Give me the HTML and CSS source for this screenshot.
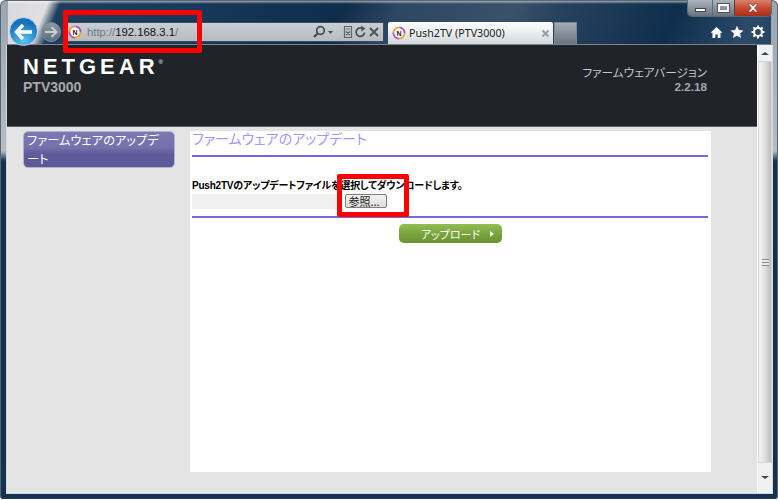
FILE: index.html
```html
<!DOCTYPE html>
<html lang="ja">
<head>
<meta charset="utf-8">
<title>Push2TV (PTV3000)</title>
<link rel="stylesheet" href="styles.css">
</head>
<body>
<div class="window">
  <div class="chrome">
    <div class="captions">
      <span class="cap cap-min"><i></i></span>
      <span class="cap cap-max"><i></i></span>
      <span class="cap cap-close">
        <svg width="14" height="10" viewBox="0 0 14 10"><path d="M2 1h3l2 2.2L9 1h3L8.600 5 12 9H9L7 6.800 5 9H2l3.400-4z" fill="#fff" stroke="#7d2a20" stroke-width=".6"/></svg>
      </span>
    </div>
    <div class="navbar">
      <div class="nav-buttons">
        <span class="back">
          <svg width="20" height="18" viewBox="0 0 20 18"><path d="M9 2 2.500 9 9 16M3 9h15" fill="none" stroke="#fff" stroke-width="3.400"/></svg>
        </span>
        <span class="forward">
          <svg width="14" height="12" viewBox="0 0 14 12"><path d="M7.500 1 12.500 6 7.500 11M12 6H1" fill="none" stroke="#c7ced4" stroke-width="2"/></svg>
        </span>
      </div>
      <div class="address">
        <svg class="favicon" width="14" height="14" viewBox="0 0 14 14"><circle cx="7" cy="7" r="5.500" fill="none" stroke="#f0a030" stroke-width="2" stroke-dasharray="8.600 8.600"/><circle cx="7" cy="7" r="5.500" fill="none" stroke="#b050c0" stroke-width="2" stroke-dasharray="8.600 8.600" stroke-dashoffset="8.600"/><circle cx="7" cy="7" r="4.500" fill="#fff"/><text x="7" y="9.500" class="fav-n">N</text></svg>
        <span class="url"><span class="url-dim">http://</span>192.168.3.1<span class="url-dim">/</span></span>
        <span class="addr-tools">
          <svg width="14" height="14" viewBox="0 0 14 14"><circle cx="8.500" cy="5.500" r="3.800" fill="none" stroke="#444c52" stroke-width="1.700"/><path d="M5.800 8.200 2 12" stroke="#444c52" stroke-width="2.200"/></svg>
          <svg width="7" height="14" viewBox="0 0 7 14"><path d="M1 6h5L3.500 9z" fill="#444c52"/></svg>
          <svg class="gap-l" width="10" height="14" viewBox="0 0 10 14"><path d="M1.500 1.500h7v11h-7zM3 4h4M3 6.500 7 10M7 6.500 3 10" fill="none" stroke="#5f676d" stroke-width="1.200"/></svg>
          <svg width="13" height="14" viewBox="0 0 13 14"><path d="M10.500 7.500A4.200 4.200 0 1 1 8.500 3.600" fill="none" stroke="#4c5359" stroke-width="1.800"/><path d="M7 .5l4.500 3L7.500 6.500z" fill="#4c5359"/></svg>
          <svg width="12" height="14" viewBox="0 0 12 14"><path d="M2 3l8 8M10 3l-8 8" stroke="#4c5359" stroke-width="2"/></svg>
        </span>
      </div>
      <div class="tab">
        <svg class="favicon" width="14" height="14" viewBox="0 0 14 14"><circle cx="7" cy="7" r="5.500" fill="none" stroke="#f0a030" stroke-width="2" stroke-dasharray="8.600 8.600"/><circle cx="7" cy="7" r="5.500" fill="none" stroke="#b050c0" stroke-width="2" stroke-dasharray="8.600 8.600" stroke-dashoffset="8.600"/><circle cx="7" cy="7" r="4.500" fill="#fff"/><text x="7" y="9.500" class="fav-n">N</text></svg>
        <span class="tab-title">Push2TV (PTV3000)</span>
        <svg width="9" height="9" viewBox="0 0 9 9"><path d="M1.500 1.500l6 6M7.500 1.500l-6 6" stroke="#9a9fa4" stroke-width="2"/></svg>
      </div>
      <div class="newtab"></div>
      <div class="tools">
        <svg width="13" height="13" viewBox="0 0 13 13"><path d="M6.500 1 0.500 6.800H2.500V12H5.300V8.500H7.700V12H10.500V6.800H12.500z" fill="#fff"/></svg>
        <svg width="14" height="14" viewBox="0 0 14 14"><path d="M7 .8l1.900 4.300 4.600.4-3.500 3 1.100 4.600L7 10.700l-4.100 2.400L4 8.500.5 5.500l4.600-.4z" fill="#fff"/></svg>
        <svg width="14" height="14" viewBox="0 0 14 14"><circle cx="7" cy="7" r="4" fill="none" stroke="#fff" stroke-width="2.200"/><path d="M7 .5v3M7 10.500v3M.5 7h3M10.500 7h3M2.400 2.400l2.100 2.100M9.500 9.500l2.100 2.100M11.600 2.400 9.500 4.500M4.500 9.500l-2.100 2.100" stroke="#fff" stroke-width="2"/></svg>
      </div>
    </div>
  </div>

  <div class="viewport">
    <div class="page">
      <header class="brand">
        <div>
          <div class="logo">NETGEAR<span class="reg">®</span></div>
          <div class="model">PTV3000</div>
        </div>
        <div class="version">
          <div class="version-label">ファームウェアバージョン</div>
          <div class="version-num">2.2.18</div>
        </div>
      </header>
      <div class="body-area">
        <nav class="sidebar">
          <a class="menu-item">ファームウェアのアップデート</a>
        </nav>
        <main class="panel">
          <h1 class="panel-title">ファームウェアのアップデート</h1>
          <p class="instruction">Push2TVのアップデートファイルを選択してダウンロードします。</p>
          <div class="file-row">
            <div class="file-field"></div>
            <button class="browse">参照...</button>
          </div>
          <div class="actions">
            <button class="upload">アップロード<i class="upload-arrow"></i></button>
          </div>
        </main>
      </div>
    </div>
    <div class="scrollbar">
      <div class="sb-btn"><i class="arrow-up"></i></div>
      <div class="sb-thumb"><i class="grip"></i></div>
      <div class="sb-btn sb-btn-end"><i class="arrow-down"></i></div>
    </div>
  </div>
</div>
<div class="mark mark-url"></div>
<div class="mark mark-browse"></div>
</body>
</html>
```

FILE: styles.css
```css
* { box-sizing: border-box; }
html, body { margin: 0; padding: 0; }
body {
  width: 778px;
  height: 500px;
  position: relative;
  overflow: hidden;
  background: #fff;
  font-family: "Liberation Sans", "Noto Sans CJK JP", sans-serif;
  font-feature-settings: "palt";
}
.window {
  height: 499px;
  display: flex;
  flex-direction: column;
  padding: 0 4px 4px 5px;
  border: 1px solid #5b6670;
  border-bottom-color: #2a3c4e;
  border-radius: 6px 6px 3px 3px;
  background:
    linear-gradient(180deg, #9aa6b0 0, #b4bdc4 150px, #12304f 160px, #14324f 100%) left top / 7px 100% no-repeat,
    linear-gradient(180deg, #9aa6b0 0, #b4bdc4 150px, #12304f 160px, #14324f 100%) right top / 6px 100% no-repeat,
    linear-gradient(180deg, rgba(255,255,255,.55) 0, rgba(255,255,255,0) 3px) top / 100% 46px no-repeat,
    linear-gradient(112deg, #d5d9de 0, #e2dfe0 44px, #1d3e5e 56px, #17385a 190px, #0f2c4b 320px, #2c4763 370px, #3a5269 480px, #27425e 520px, #0f2e4d 630px, #2a4a68 700px, #203f5c 778px) top / 100% 46px no-repeat,
    #14324f;
}
.chrome { height: 43px; flex: none; position: relative; }
.captions {
  position: absolute;
  right: 1px;
  top: -1px;
  display: flex;
  height: 17px;
  width: 85px;
  border: 1px solid #5e6b76;
  border-top: 0;
  border-radius: 0 0 5px 5px;
  overflow: hidden;
}
.cap { display: flex; align-items: center; justify-content: center; }
.cap-min { width: 24px; background: linear-gradient(#aab4bd, #69747f); }
.cap-min i { width: 11px; height: 4px; background: #fff; border: 1px solid #444; margin-top: 3px; }
.cap-max { width: 22px; background: linear-gradient(#aab4bd, #69747f); border-left: 1px solid #5e6b76; }
.cap-max i { width: 11px; height: 8px; border: 2px solid #fff; outline: 1px solid #555; }
.cap-close { flex: 1; background: linear-gradient(#d9836e 0, #c74a30 50%, #a92e19 100%); border-left: 1px solid #5e3b36; }
.navbar { position: absolute; left: -6px; right: -5px; top: 0; height: 43px; }
.nav-buttons { position: absolute; left: 9px; top: 16px; display: flex; align-items: center; }
.back {
  width: 29px; height: 29px;
  border-radius: 50%;
  border: 1px solid #c5d3dd;
  background: radial-gradient(circle at 50% 85%, #5cc2f5, #1472bd 70%);
  display: flex; align-items: center; justify-content: center;
}
.forward {
  width: 20px; height: 20px;
  margin-left: 3px;
  border-radius: 50%;
  border: 1px solid #7e8c98;
  background: linear-gradient(#8b98a4, #5c6d7c);
  display: flex; align-items: center; justify-content: center;
}
.address {
  position: absolute; left: 66px; top: 21px;
  width: 318px; height: 20px;
  background: linear-gradient(#c9cfd4, #b5bcc2);
  border: 1px solid #3c4c5b;
  display: flex; align-items: center;
  padding: 0 3px 0 1px;
}
.favicon { flex: none; }
.fav-n { font: bold 7px "Liberation Sans", sans-serif; fill: #222; text-anchor: middle; }
.url { margin-left: 5px; font-size: 11.300px; color: #111; white-space: nowrap; }
.url-dim { color: #72787d; }
.addr-tools { margin-left: auto; display: flex; align-items: center; gap: 1px; }
.gap-l { margin-left: 8px; }
.tab {
  position: absolute; left: 388px; top: 21px;
  width: 165px; height: 22px;
  background: linear-gradient(#fff, #e6e9ec 60%, #d2d6da);
  border-radius: 2px 2px 0 0;
  display: flex; align-items: center;
  padding: 0 3px 0 4px;
}
.tab-title { margin-left: 3px; font-size: 10.700px; color: #222; flex: 1; white-space: nowrap; font-family: "Noto Sans", sans-serif; }
.newtab {
  position: absolute; left: 554px; top: 21px;
  width: 23px; height: 22px;
  background: linear-gradient(#a2abb3, #68747f);
  border: 1px solid #7b8791;
  border-bottom: 0;
}
.tools { position: absolute; right: 13px; top: 24px; display: flex; gap: 7px; align-items: center; }
.viewport {
  flex: 1;
  min-height: 0;
  display: flex;
  border: 1px solid #d5dade;
  border-top-color: #7b8791;
}
.page { flex: 1; min-width: 0; display: flex; flex-direction: column; background: #e4e4e4; }
.brand {
  height: 82px;
  flex: none;
  background: #202429;
  border-bottom: 1px solid #5d6165;
  display: flex;
  justify-content: space-between;
  padding: 10px 50px 0 16px;
}
.logo {
  font-size: 22px; line-height: 24px; font-weight: bold;
  color: #fff; letter-spacing: 4px; white-space: nowrap;
  display: flex; align-items: flex-start;
}
.reg { font-size: 6px; line-height: 8px; letter-spacing: 0; font-weight: normal; padding-top: 3px; }
.model { font-size: 14px; line-height: 16px; font-weight: bold; color: #a6a8aa; }
.version { text-align: right; padding-top: 10px; }
.version-label { font-size: 11.700px; line-height: 15px; color: #c8c8c8; white-space: nowrap; }
.version-num { font-size: 11.700px; line-height: 14px; font-weight: bold; color: #a6a8aa; }
.body-area { flex: 1; display: flex; padding: 4px 46px 21px 16px; min-height: 0; }
.sidebar { width: 152px; flex: none; }
.menu-item {
  display: block;
  height: 37px;
  border-radius: 5px;
  border: 1px solid #b5b2d0;
  background: linear-gradient(#7c76b3 0, #7670ad 45%, #5f5a99 62%, #5d5997 100%);
  color: #fff;
  font-size: 12.300px;
  line-height: 19px;
  padding: 0 8px 0 3px;
}
.panel { margin-left: 15px; width: 521px; background: #fff; padding: 0 3px 0 2px; }
.panel-title {
  margin: 0;
  height: 26px;
  border-bottom: 2px solid #7468e4;
  font-size: 14px;
  line-height: 16px;
  font-weight: normal;
  color: #a198f2;
  white-space: nowrap;
}
.instruction {
  margin: 21px 0 0;
  font-size: 10px;
  line-height: 15px;
  font-weight: bold;
  letter-spacing: -.21px;
  color: #000;
  white-space: nowrap;
}
.file-row { display: flex; align-items: flex-start; height: 24px; margin-top: 1px; border-bottom: 2px solid #7468e4; }
.file-field { width: 148px; height: 15px; background: #f0f0f0; border-radius: 2px; }
.browse {
  margin-left: 5px;
  width: 42px; height: 14px;
  padding: 0 4px 0 0;
  font-family: "Noto Sans CJK JP", sans-serif;
  font-feature-settings: "palt";
  font-size: 11px; line-height: 12px;
  color: #222;
  border: 1px solid #7d7d7d;
  border-radius: 2px;
  background: linear-gradient(#f4f4f4, #dcdcdc);
}
.actions { display: flex; justify-content: center; padding-top: 6px; }
.upload {
  width: 103px; height: 19px;
  padding: 0 0 0 15px;
  border: 0;
  border-radius: 5px;
  background: linear-gradient(#92be55, #75a03a 60%, #6b9433);
  color: #fff;
  font-family: "Noto Sans CJK JP", sans-serif;
  font-feature-settings: "palt";
  font-size: 11px;
  display: flex; align-items: center; justify-content: center;
}
.upload-arrow {
  width: 0; height: 0;
  margin-left: 10px;
  border-left: 4px solid #fff;
  border-top: 3px solid transparent;
  border-bottom: 3px solid transparent;
}
.scrollbar {
  width: 15px; flex: none;
  display: flex; flex-direction: column;
  background: #eef0f1;
  border-left: 1px solid #fff;
}
.sb-btn { height: 16px; flex: none; display: flex; align-items: center; justify-content: center; }
.sb-btn-end { height: 30px; align-items: flex-end; padding-bottom: 14px; }
.sb-thumb {
  flex: 1;
  background: linear-gradient(90deg, #f4f4f4, #e2e2e2 45%, #bcbcbc);
  border: 1px solid #d6d6d6;
  display: flex; align-items: center; justify-content: center;
}
.grip { width: 7px; height: 7px; background: repeating-linear-gradient(#8a8a8a 0 1px, #e8e8e8 1px 3px); }
.arrow-up, .arrow-down {
  width: 0; height: 0;
  border-left: 4px solid transparent;
  border-right: 4px solid transparent;
}
.arrow-up { border-bottom: 3px solid #444; }
.arrow-down { border-top: 3px solid #444; }
.mark { position: absolute; border: 5px solid #f00; border-radius: 2px; }
.mark-url { left: 63px; top: 10px; width: 139px; height: 43px; }
.mark-browse { left: 337px; top: 174px; width: 72px; height: 43px; }
```
